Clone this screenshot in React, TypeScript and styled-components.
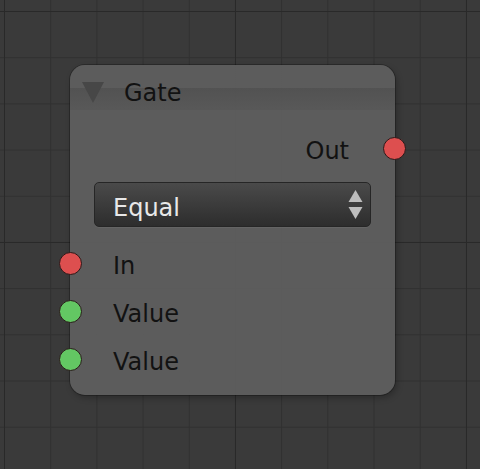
import React from "react";
import styled, { createGlobalStyle } from "styled-components";

const Global = createGlobalStyle`
  html, body { margin: 0; padding: 0; background: #393939; }
  body { font-family: "DejaVu Sans", "Liberation Sans", sans-serif; }
`;

const Canvas = styled.div`
  width: 480px;
  height: 469px;
  box-sizing: border-box;
  padding: 65px 0 0 70px;
  overflow: hidden;
  background-color: #3a3a3a;
  background-image:
    linear-gradient(to right, #292929 1px, transparent 1px),
    linear-gradient(to bottom, #292929 1px, transparent 1px),
    linear-gradient(to right, #303030 1px, transparent 1px),
    linear-gradient(to bottom, #303030 1px, transparent 1px);
  background-size: 231px 231px, 231px 231px, 46.2px 46.2px, 46.2px 46.2px;
  background-position: 4px 11px, 4px 11px, 4px 11px, 4px 11px;
`;

const Node = styled.div`
  position: relative;
  width: 325px;
  height: 330px;
  box-sizing: border-box;
  border-radius: 15px;
  background: rgba(96, 96, 96, 0.9);
  box-shadow: 0 0 0 1px rgba(0, 0, 0, 0.25), 2px 3px 6px rgba(0, 0, 0, 0.25);
  display: flex;
  flex-direction: column;
`;

const Header = styled.div`
  height: 45px;
  box-sizing: border-box;
  display: flex;
  align-items: center;
  padding: 10px 0 0 12px;
  border-radius: 15px 15px 0 0;
  background: linear-gradient(
    to bottom,
    rgba(92, 92, 92, 0.3) 0px,
    rgba(92, 92, 92, 0.3) 23px,
    rgba(70, 70, 70, 0.45) 23px,
    rgba(80, 80, 80, 0.3) 45px
  );
`;

const Collapse = styled.svg`
  width: 22px;
  height: 21px;
  margin-right: 20px;
  flex: none;
`;

const Title = styled.span`
  font-size: 24px;
  color: #121212;
  line-height: 1;
  margin-top: 1px;
`;

const Body = styled.div`
  flex: 1;
  display: flex;
  flex-direction: column;
  padding: 18px 0 12px 0;
`;

const Row = styled.div<{ $align: "left" | "right"; $h: number }>`
  position: relative;
  height: ${(p) => p.$h}px;
  display: flex;
  align-items: center;
  justify-content: ${(p) => (p.$align === "right" ? "flex-end" : "flex-start")};
  padding: ${(p) => (p.$align === "right" ? "0 46px 0 0" : "0 0 0 43px")};
`;

const Label = styled.span`
  font-size: 24px;
  color: #121212;
  line-height: 1;
  margin-top: 5px;
`;

const Socket = styled.span<{ $side: "left" | "right"; $color: string }>`
  position: absolute;
  top: 50%;
  ${(p) => (p.$side === "left" ? "left: -11px;" : "right: -10.5px;")}
  width: 21px;
  height: 21px;
  margin-top: -11.5px;
  border-radius: 50%;
  background: ${(p) => p.$color};
  border: 1px solid #2a1a1a;
`;

const Select = styled.div`
  margin: 14px 24px 12px 24px;
  height: 45px;
  box-sizing: border-box;
  border-radius: 5px;
  border: 1px solid #262626;
  background: linear-gradient(to bottom, #4a4a4a, #2d2d2d);
  display: flex;
  align-items: center;
  justify-content: space-between;
  padding: 0 7px 0 18px;
  box-shadow: 0 1px 0 rgba(255, 255, 255, 0.05);
`;

const SelectText = styled.span`
  font-size: 24px;
  color: #e8e8e8;
  line-height: 1;
  margin-top: 6px;
`;

const Arrows = styled.svg`
  width: 15px;
  height: 30px;
`;

export default function App() {
  return (
    <>
      <Global />
      <Canvas>
        <Node>
          <Header>
            <Collapse viewBox="0 0 22 21">
              <polygon points="0,0 22,0 11,21" fill="#474747" />
            </Collapse>
            <Title>Gate</Title>
          </Header>
          <Body>
            <Row $align="right" $h={40}>
              <Label>Out</Label>
              <Socket $side="right" $color="#dd4f4f" />
            </Row>
            <Select>
              <SelectText>Equal</SelectText>
              <Arrows viewBox="0 0 15 30">
                <polygon points="7.5,0 14.5,12 0.5,12" fill="#bdbdbd" />
                <polygon points="0.5,17 14.5,17 7.5,29" fill="#bdbdbd" />
              </Arrows>
            </Select>
            <Row $align="left" $h={48}>
              <Socket $side="left" $color="#dd4f4f" />
              <Label>In</Label>
            </Row>
            <Row $align="left" $h={48}>
              <Socket $side="left" $color="#63c763" />
              <Label>Value</Label>
            </Row>
            <Row $align="left" $h={48}>
              <Socket $side="left" $color="#63c763" />
              <Label>Value</Label>
            </Row>
          </Body>
        </Node>
      </Canvas>
    </>
  );
}
